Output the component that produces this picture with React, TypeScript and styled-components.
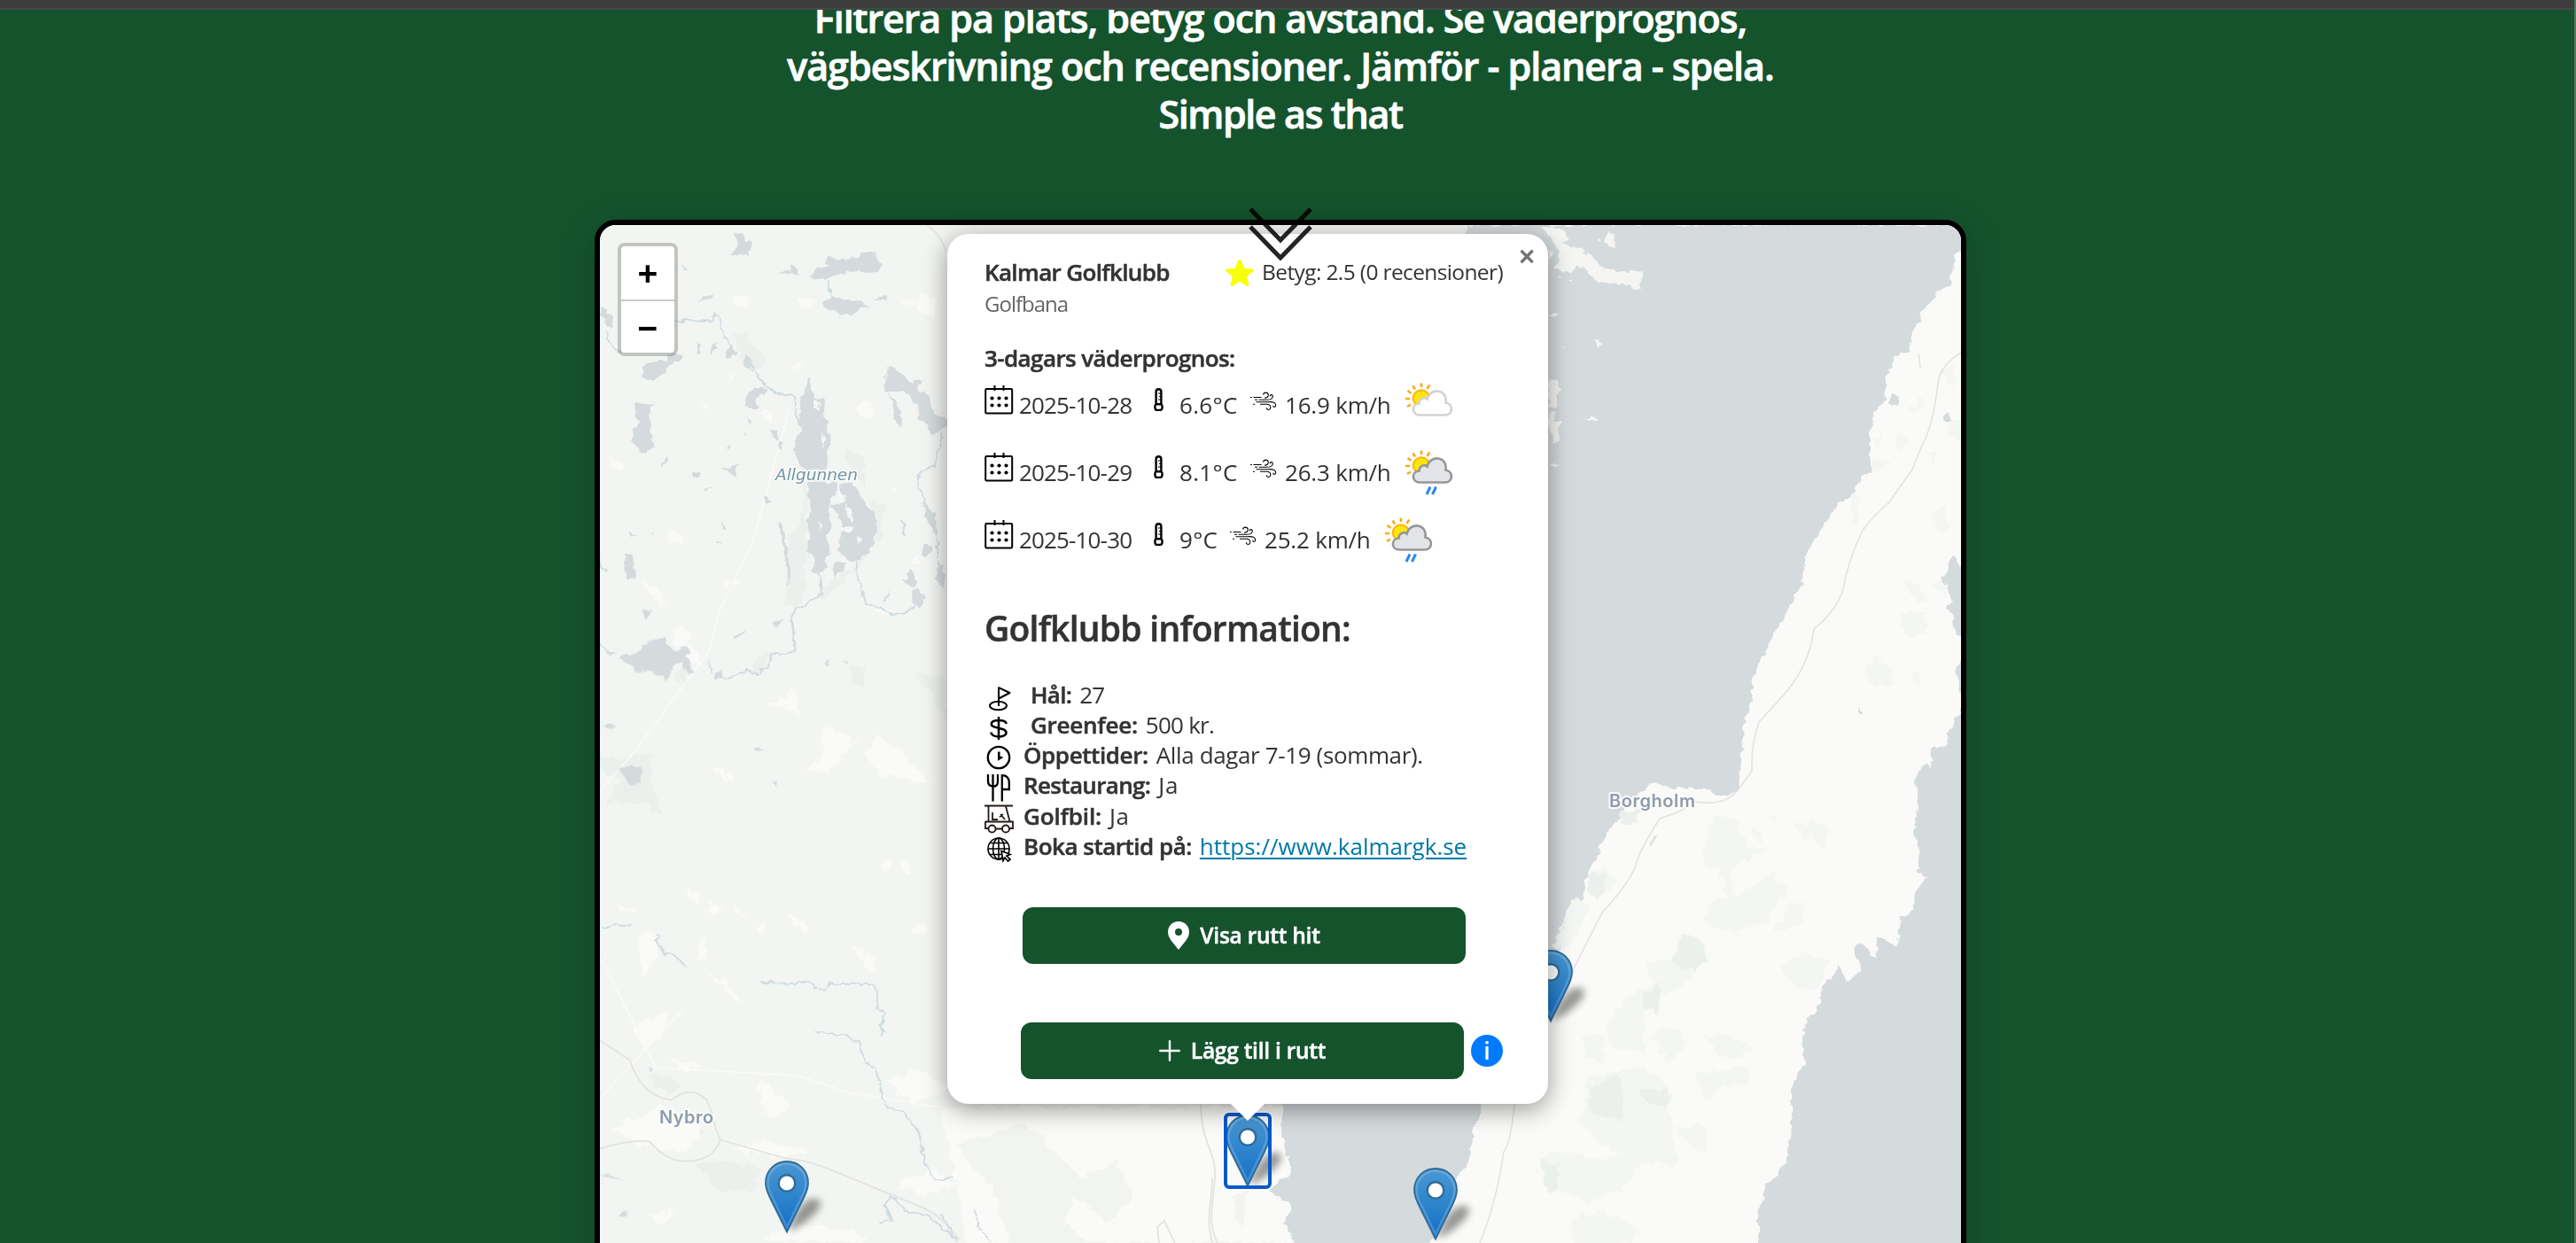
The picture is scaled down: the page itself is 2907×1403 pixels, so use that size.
import React from "react";
import styled, { createGlobalStyle } from "styled-components";

const sans = `"Open Sans", "Noto Sans", sans-serif`;

const GlobalStyle = createGlobalStyle`
  * { box-sizing: border-box; }
  body { margin: 0; background: #15532d; font-family: ${sans}; }
`;

const Page = styled.div`
  position: relative;
  height: 1403px;
  overflow: hidden;
  padding-right: 15px;
  background: #15532d;
  border-right: 2px solid #4f7a60;
  display: flex;
  flex-direction: column;
  align-items: center;
`;

const TopBar = styled.div`
  position: relative;
  z-index: 2;
  flex: none;
  align-self: stretch;
  height: 11px;
  margin-right: -17px;
  background: #3c3c3c;
  border-bottom: 2px solid #464646;
`;

const Intro = styled.h2`
  flex: none;
  margin: -17px 0 0;
  display: flex;
  flex-direction: column;
  align-items: center;
  color: #fff;
  font-size: 43px;
  font-weight: 600;
  line-height: 54px;
  -webkit-text-stroke: 0.8px #fff;
`;

const Line = styled.span<{ $ls: number }>`
  white-space: pre;
  letter-spacing: ${(p) => p.$ls}px;
`;

const MapFrame = styled.div`
  position: relative;
  flex: none;
  width: 1548px;
  height: 1400px;
  margin-top: 92px;
  border: 6px solid #000;
  border-radius: 24px;
  background: #f3f5f2;
  box-shadow: 0 8px 40px rgba(0, 0, 0, 0.18);
`;

const MapSurface = styled.svg`
  display: block;
  width: 1536px;
  height: 1149px;
  border-radius: 18px 18px 0 0;
`;

const ZoomControl = styled.div`
  position: absolute;
  left: 20px;
  top: 20px;
  width: 68px;
  display: flex;
  flex-direction: column;
  border: 4px solid rgba(0, 0, 0, 0.2);
  border-radius: 8px;
  background: #fff;
  background-clip: padding-box;
`;

const ZoomButton = styled.button`
  height: 60px;
  padding: 2px 0 0;
  border: 0;
  background: none;
  color: #000;
  font: 700 39px/58px "Liberation Sans", Arial, sans-serif;
  & + & { border-top: 2px solid #ccc; }
`;

const MarkerSpot = styled.div<{ $x: number; $y: number; $focus?: boolean }>`
  position: absolute;
  left: ${(p) => p.$x - 25}px;
  top: ${(p) => p.$y - 82}px;
  width: 50px;
  height: 82px;
  border-radius: 4px;
  outline: ${(p) => (p.$focus ? "4px solid #0659cc" : "none")};
  outline-offset: -2px;
  box-shadow: ${(p) => (p.$focus ? "0 0 0 4px #fff" : "none")};
  svg { display: block; overflow: visible; }
`;

const Chevrons = styled.svg`
  position: absolute;
  z-index: 5;
  left: 731px;
  top: -22px;
`;

const Popup = styled.section`
  position: absolute;
  left: 392px;
  top: 10px;
  width: 678px;
  height: 982px;
  padding: 25px 52px 28px 42px;
  display: flex;
  flex-direction: column;
  border-radius: 24px;
  background: #fff;
  color: #333;
  font-size: 26px;
  line-height: 36px;
  box-shadow: 0 6px 28px rgba(0, 0, 0, 0.4);
`;

const PopupTip = styled.div`
  position: absolute;
  left: 318px;
  top: 980px;
  width: 42px;
  height: 21px;
  background: #fff;
  clip-path: polygon(0 0, 100% 0, 50% 100%);
`;

const CloseButton = styled.button`
  position: absolute;
  right: 0;
  top: 2px;
  width: 48px;
  height: 48px;
  padding: 0;
  border: 0;
  background: none;
  color: #757575;
  font: 700 31px/48px "Liberation Sans", Arial, sans-serif;
`;

const HeaderRow = styled.header`
  display: flex;
  justify-content: space-between;
  height: 36px;
`;

const Strong = styled.strong<{ $ls?: number }>`
  font-weight: 600;
  white-space: pre;
  letter-spacing: ${(p) => p.$ls ?? -0.6}px;
  -webkit-text-stroke: 0.5px currentColor;
`;

const Rating = styled.div`
  display: flex;
  align-items: flex-start;
  gap: 9px;
  margin-right: -1px;
  font-size: 24.5px;
  letter-spacing: -0.62px;
  svg { margin-top: 4px; }
`;

const Kind = styled.div`
  height: 34px;
  line-height: 35px;
  font-size: 24px;
  letter-spacing: -1px;
  color: #666;
`;

const SectionTitle = styled.div`
  margin-top: 27px;
  height: 36px;
`;

const WeatherRow = styled.div`
  display: flex;
  align-items: flex-start;
  height: 76px;
`;

const DateIcon = styled.svg`
  flex: none;
  margin: 12px 6px 0 0;
`;

const WeatherText = styled.span<{ $w: number; $ls: number }>`
  width: ${(p) => p.$w}px;
  padding-top: 17px;
  white-space: pre;
  letter-spacing: ${(p) => p.$ls}px;
`;

const ThermoIcon = styled.svg`
  flex: none;
  margin: 16px 18px 0 0;
`;

const WindIcon = styled.svg`
  flex: none;
  margin: 20px 9px 0 0;
`;

const SkyIcon = styled.svg`
  flex: none;
  margin-top: 10px;
`;

const InfoTitle = styled.h3`
  margin: 32px 0 31px;
  font-size: 39px;
  line-height: 54px;
  font-weight: 400;
`;

const InfoList = styled.ul`
  margin: 0;
  padding: 0;
  list-style: none;
`;

const InfoRow = styled.li<{ $indent: number }>`
  display: flex;
  height: 34.2px;
  line-height: 35.6px;
  svg { flex: none; margin-right: ${(p) => p.$indent}px; }
`;

const InfoValue = styled.span<{ $ls: number }>`
  margin-left: 9px;
  white-space: pre;
  letter-spacing: ${(p) => p.$ls}px;
`;

const SiteLink = styled.a`
  margin-left: 9px;
  color: #0078a8;
  text-decoration: underline;
  text-decoration-thickness: 2px;
  text-underline-offset: 3px;
`;

const Actions = styled.div`
  margin-top: 52px;
  display: flex;
  flex-direction: column;
  gap: 66px;
`;

const ActionRow = styled.div<{ $offset: number }>`
  display: flex;
  align-items: center;
  gap: 8px;
  padding-left: ${(p) => p.$offset}px;
`;

const ActionButton = styled.button`
  flex: none;
  width: 500px;
  height: 64px;
  padding: 0;
  display: flex;
  align-items: center;
  justify-content: center;
  gap: 12px;
  border: 0;
  border-radius: 12px;
  background: #15532d;
  color: #fff;
  font: 600 24.5px/36px ${sans};
  letter-spacing: -0.25px;
  -webkit-text-stroke: 0.5px #fff;
`;

const InfoBadge = styled.span`
  flex: none;
  width: 36px;
  height: 36px;
  border-radius: 50%;
  background: #007bff;
  color: #fff;
  text-align: center;
  font: 600 27px/35px ${sans};
`;

/* ---------- map drawing ---------- */

const WATER = "#d5dadd";
const GREEN = "#ebf0ec";
const PALE = "#fafaf8";

const lakes = [
  "M505 95l25 8 12 22 22 4-4 24-10 24-25-10-32 8 18-22 8-20-6-18z",
  "M757 248l30-28 34-6-2-34 50 8 50-4 20-16 38-4 18 24 8 28-16 16-36 2-36-8-40 12-40 4-20 12-34-2z",
  "M805 340l30-24 38 8 50 2 46 20-40 12-28 18-36 2-26-20-34-6zM970 320l55-10-8 14z",
  "M703 197l14 26 10 20-22-4-48-4 38-12z",
  "M378 330l30-16 22-6-10 14-38 10zM316 208l38 16-20-2z",
  "M52 350l28 10-6 14 22 6-4 40-20-10-8-30-12-8z",
  "M196 555l40-20 30-2 30-28 30 10-4 18-40 10-20 36-40 24-30-18z",
  "M378 475l10 4 4 28-14 4zM430 480l18-14-6 30-14 22zM480 500l18-28 18 36-20 4-18 18zM545 508l20 20 10 28-22 6-18-24z",
  "M545 650l30-30 44 6-4 28-22-12-18 20 16 26-14 12-34-14z",
  "M166 670l36 8 34-2-18 14 4 60 14 70-30 22-20-2-24-32 4-48 14-20z",
  "M757 580l12 56 16 30 20-10 4 28-4 36 18 14-4 40 14 10-10 42 0 70-36 6-50-2-20-40-12-24 8-40 20-24-8-40 6-60-2-20 14-10 4-28z",
  "M755 945l100-4 0 34-30 40 4 90-12 20 10 60-20 30 16 16-40 22-18-10 16-20-6-30-22-14 4-60 4-90z",
  "M864 950l42-10 36 60 36 50 14 46-30 90-36 20-26 10-40-40 4-56 20-14-34-60-26-34 30 6 12-40z",
  "M1014 640l6-80 30-6 50 50 48-10-24 26 40 30 16 56 36 14 20 30-26 10-30 26-30-46-20-16-10-50-40-40z",
  "M1026 640l34 40 16 50-8 28-18-22-6-50z",
  "M1140 1010l46 40 8 60-6 20-22-40-16-50zM1150 1150l30 14-20 30-22-6zM1196 1200l26 60-10 36-22-20z",
  "M1078 1280l26-44 22 50-20 10zM1108 1310l20-12 24 40-14 26-30-12z",
  "M660 1070l20 60 4 60 12 50 0 30-12 24 4-50-14-50-2-50-20-50z",
  "M456 898l70-18-22 22 4 30-26-30zM362 908l28-2-4 16-22-2zM258 880l20-28-2 20-16 14zM398 964l26 0-14 10z",
  "M632 770l18-8 4 30-12 6zM658 798l14 10-6 26-10-12zM480 830l8-20 4 24zM548 715l12 32-8-4zM540 770l12 14-8 6z",
  "M140 1184l22 10 6 50 8 20-34 6-4-40zM50 1200l26 50-24-24z",
  "M196 1376l28-4-4 28-14 8zM232 1480l40-8 6 30-40 0zM506 1466l34-20 0 14-32 14zM642 1420l28-16-6 22-20 10z",
  "M836 1240l16-26 32 4-14 24-24 22zM1010 1340l20-36-2 20-14 24zM606 990l28 20-22 6z",
  "M152 1106l18 14-14 4zM224 1116l14 2-10 8zM440 1144l20 4-16 4zM460 1070l16 30-10 0zM1074 1066l12 20 0 40-8-4z",
];
const lakesLow = [
  "M110 95l30-10 40-5 30-25 50-8 50 30 40-12 10 14-20 10 30 42-20 4-20-30-30 6-20 40-60-24-50 4-20-20z",
  "M115 372l50-6 28 6-10 40-30 2-20-14zM62 262l46 2-24 8zM572 320l40 6-30 4z",
  "M436 140l26-12 4 14-26 10zM508 44l34-16-30 18zM880 102l12 8-10 4zM634 402l20 8-8 12zM808 114l24-16-8 14z",
  "M52 1390l80 20-60-8zM116 1500l34-16-20 22zM390 1284l16 10-10 2zM216 1126l18 4-12 8z",
];
const rivers = [
  "M75 430q6 50 45 75M305 402l30-4 0-8 50 2 40 4 14-22 12 10 8 36 26 46 12 20M566 562l46 52 40 28 40 4 18 14 2 44 14 40",
  "M1205 770q10 40-12 70l-8 44-44 20-16 38 20 50 10 30M792 1244l10 76-50 40-34 8-18 30 4 40 6 60",
  "M920 1210l4 60 14 40 12 44 50 14 50 24 30-4 40-28M824 260l6 54M1190 1130l8 70",
];
const riversLow = [
  "M704 0l8 74-26 10-52 4-12 30-40 18-30-10-60 20-40-4M418 102l14 30M52 64l50 24",
  "M52 776l40-8 68 2M242 786l10 12-12 10 30 32 34 4 44 34",
  "M592 912l120 2 36-4 60 24 20-18 40 0 110 0 10 30 4 30 24 12-14 40 10 10-12-20 8 30",
  "M780 1036l100 10 50 18 16 40 46 40 16 60 20 28 40 2 60 50 16 60 20 40 20 24 50-2",
  "M1000 1518l40-10-26-34 20-24 60 40 80 14 60 40 24 14",
];
const roadsLow = [
  "M52 1058l60 30 40 20q40 90 140 100q70-40 120 0q20 30 30 70l16 30q-20 54-120 54-60 0-120-50-60-6-166 18M458 1308q140 30 230 48 60 0 180 38l280 86q60 20 120 80",
];
const pale = [
  "M490 330l40-20 40 10-20 26-40 6zM720 330l50-10 10 20-30 20zM1140 300l50 20-10 60-60-20zM1080 320l40 20-30 10z",
  "M915 690l30-20 28-4-8 60-30-10zM580 700l50 10 0 30zM80 850l60 40-10 20-40-20zM270 1110l76 10-10 40-50-10z",
  "M180 1280l60 20 40 60-20 0zM460 1300l50-36 10 26zM290 1430l50 10 10 60-40 0zM960 1370l90 10-30 16zM700 540l40 10-30 12zM1100 1220l36-30-6 30z",
  "M400 660l12 36-10 4zM480 600l24-30 0 20zM1030 970l24-20-6 30z",
];
const paleLow = [
  "M280 30l60-20 20 60 40 40-60 0zM620 210l60-20 34-30 6 80-50-20zM740 380l60-30 10-80 60 10 60 24-60 30-40 50z",
  "M950 340l40-50 80 40 110 90-80-20-100-10zM420 370l50 0 30 36-40-10zM1000 610l40-10 0 34-34 4zM1064 620l36-16-6 34z",
  "M340 670l50 20-4 20-40-14zM690 740l60 20-4 24-40-14zM496 716l60 30-50-10zM410 730l20-20 40 24-30 4zM580 770l30-10-10 36z",
  "M420 890l60 20 60 60-60-30zM900 820l80 30 0 44-60-50zM110 710l60 30-50-6zM180 800l60-20 10 60-50 60-10-30z",
  "M100 1280l160-60 140 60-60 60-160-20zM590 1150l60 40 50 30-60 40-40-20zM500 1330l120-20 140 30-130 10zM1020 1160l120-30 90 50-120 40z",
  "M1040 1420l140-40 80 40-100 30zM160 1020l120-30-20 60-60 30zM280 1100l120 20-60 20zM600 1560l120-40 200 20 40 28zM220 1500l80-20-30 50zM380 800l20 0 20 60-30 0zM1110 770l40-10 10 24-40 6z",
];
const green = [
  "M500 450l50-20 6 40 50 50-10 50-60-40zM880 840l60 10 10 60 0 60-40-60-20-30zM740 940l14 0 0 250-20 170-60 0 20-240 40-30z",
  "M970 1000l50 20-20 100-80 110-110 110-20-20 120-100 40-60z",
];
const greenLow = [
  "M52 340l60 10 110-10 10 100 30 50-60-30-130 0 50-60-70-20zM890 120l60 0-10 50-30-10zM1120 130l100 20 0 100-50-70zM576 90l46 0-20 40-30-4zM300 130l50-10-10 40-40-2z",
  "M380 1370l100-10 120 20-40 60-110-6zM210 1140l80 10 30 20-40 30z",
];
const islands = [
  "M0 70l40-5 60 35-40 15 80 20 40 30 20 20 60 14 80-2 4 20-10 36-60-14-80-6-60-50-40 20-50-10 20-50-20-30z",
  "M210 110l10-28 24 10 4 30-20 4zM175 400l30 8-10 22zM140 636l30-10 18 14zM190 110l10-4 2 8z",
  "M22 520l30 4 18 24-20 14-2 40-26 0zM30 610l14 10-4 20 22 4-8 24 6 30-16 10-10-22-12-40zM22 768l40 2-20 12zM22 328l40-4-20 14zM22 130l12 20-10 14zM64 420l14 0-8 6zM84 340l6 10-6-4zM90 224l14 2-6 6zM54 208l14 8-8 2z",
];
const olandPatches = [
  "M1222 1115l40-5 50 60-40 8zM1216 1205l84 0 6 60-80 6zM1090 1395l40-60 56 30 4 50-60 10zM1238 1385l40 0 0 40zM1245 605l40-30 10 30zM1200 670l50 20-40 46zM1300 740l40-5-10 30zM1320 910l40-30 16 80-30 10zM1380 640l40 0 0 60-40-10zM1050 860l26 0-20 90-10-10zM1120 690l40-20-20 50zM1120 750l70 6-70 40zM1340 500l60-20-10 60zM1315 1120l40-10 20 50z",
];
const olandPatchesLow = [
  "M680 310l80 20 30 100-60 50 20 80 120-80 50 50-80 100-90 30-100-30 10-60 70-20-40-80-50-20zM990 330l60 10-4 70-40-20zM880 660l50-90 56 0-20 60zM460 740l110-10 40 60-100 50-120 100-60-20 60-70 90-40z",
  "M900 750l60-30 90 20-10 60-60 30-70-50zM270 490l60-30 30 50-60 40zM150 700l70-140 60 10-40 80-40 50zM330 900l120-10 0 120-110-20zM250 960l70 0 0 80-60-10zM260 1090l120-30 70-10 80 60 10 100 20 130-140-10-120-60-60-60 20-60z",
  "M110 1320l60-20 160 20 120-10-70 100-120 40-140-60zM210 1500l100-30 120 60-30 40-180 0zM620 1070l180-20-10 60-80-10-60 50zM640 960l100 0 70 40-90 30zM560 1230l90-10 0 80-40-10zM480 960l60-30 60 50-70 60zM800 350l30 0 10 50zM750 400l100 10-60 40zM940 340l70 0-30 40zM850 310l40 6-20 20z",
];
const olandGreen = [
  "M545 730l30-70 70 20 6 60-40 30-60-20zM380 300l70-10-40 50-40-10zM270 1110l100-40 10 140-100-20zM440 1120l90 0 0 50-80-10zM280 480l60 0-40 80-30-20zM450 830l50-20 0 80-50-10zM110 1320l60 20-10 80-40-20z",
];

function MapDrawing() {
  return (
    <MapSurface viewBox="677 254 1536 1149">
      <defs>
        <filter id="rough" x="-5%" y="-5%" width="110%" height="110%">
          <feTurbulence type="fractalNoise" baseFrequency="0.09" numOctaves="3" seed="4" result="n" />
          <feDisplacementMap in="SourceGraphic" in2="n" scale="13" xChannelSelector="R" yChannelSelector="G" />
        </filter>
        <filter id="coast" x="-5%" y="-5%" width="110%" height="110%">
          <feTurbulence type="fractalNoise" baseFrequency="0.12" numOctaves="2" seed="9" result="n" />
          <feDisplacementMap in="SourceGraphic" in2="n" scale="8" xChannelSelector="R" yChannelSelector="G" />
        </filter>
      </defs>
      <rect x="677" y="254" width="1536" height="1149" fill="#f3f5f2" />
      <g filter="url(#rough)">
        <path d="M1060 1250H1460V1403H1090L1080 1340Z" fill={PALE} />
        <path d="M1080 1290l80-20 60 60-20 50 30 24h-90l-20-60zM1200 1340l60-30 20 40-30 30zM1390 1350l20-10-10 50z" fill="#f1f4f1" />
        <g transform="translate(660 230) scale(.33333)">
          <path d={green.join("")} fill={GREEN} />
          <path d={pale.join("")} fill={PALE} />
        </g>
        <g transform="translate(660 700) scale(.33333 .4484)">
          <path d={greenLow.join("")} fill={GREEN} />
          <path d={paleLow.join("")} fill={PALE} />
        </g>
      </g>
      <g fill="none" stroke="#fafbf9" strokeWidth="1.6">
        <path d="M890 465L850 610L812 690L800 735L715 850L677 893M677 1080L740 1205L900 1214L960 1234L1070 1251M677 1240L770 1140" />
      </g>
      <g fill="none" stroke="#e2e3e2" strokeWidth="1.8">
        <g transform="translate(660 700) scale(.33333 .4484)">
          <path d={roadsLow[0]} vectorEffect="non-scaling-stroke" />
        </g>
        <path d="M1045 254Q1060 262 1068 284M1355 1246C1355 1290 1373 1300 1371 1330S1362 1380 1374 1403M1368 1330C1368 1360 1360 1370 1368 1403M1308 1403L1306 1385L1314 1378L1326 1403" />
      </g>
      <g fill="none" stroke="#cfdae1" strokeWidth="1.9" strokeLinejoin="round" filter="url(#coast)">
        <g transform="translate(660 230) scale(.33333)">
          <path d={rivers.join("")} vectorEffect="non-scaling-stroke" />
        </g>
        <g transform="translate(660 700) scale(.33333 .4484)">
          <path d={riversLow.join("")} vectorEffect="non-scaling-stroke" />
        </g>
        <path d="M1060 1331L1075 1330M1100 1366L1106 1385L1118 1403M1062 1370L1080 1403" />
      </g>
      <g fill={WATER} filter="url(#coast)">
        <g transform="translate(660 230) scale(.33333)">
          <path d={lakes.join("")} />
          <path d="M780 670l14 6-2 22-14-4zM804 774l8 20-4 30-8-14zM886 1020l16 20 6 50-20-30zM868 1104l22-14 24 10-24 20zM920 1120l16 16-10 20zM792 1070l10 20-8 12zM846 970l36 20-6 30-26-14z" fill="#f6f7f5" />
        </g>
        <g transform="translate(660 700) scale(.33333 .4484)">
          <path d={lakesLow.join("")} />
        </g>
        <path d="M1654 254H2240V1420H1462L1458 1395L1449 1380L1459 1362L1440 1350L1432 1343L1458 1322L1450 1296L1446 1276L1448 1240L1500 1100L1700 700Z" />
      </g>
      <g filter="url(#coast)">
        <path
          fill={PALE}
          d="M2230 270L2213 284L2205 289L2201 322L2188 329L2173 347L2158 375L2155 396L2139 402L2130 423L2127 448L2112 471L2110 504L2113 532L2102 539L2092 556L2075 567L2058 592L2037 626L2033 659L2020 685L2003 714L1987 747L1977 766L1977 789L1970 808L1965 850L1961 890L1945 899L1924 890L1886 890L1865 883L1852 894L1833 915L1815 938L1791 987L1784 1021L1764 1062L1746 1096L1690 1200L1673 1246L1662 1280L1657 1313L1643 1327L1629 1373L1605 1420H1984L1984 1369L1993 1338L2015 1313L2022 1273L2022 1227L2036 1200L2034 1169L2039 1148L2050 1142L2058 1111L2068 1104L2075 1087L2082 1108L2101 1096L2093 1073L2099 1065L2117 1081L2118 1058L2141 1067L2144 1038L2160 1027L2161 1006L2175 990L2165 985L2165 958L2160 942L2165 912L2161 881L2170 863L2180 865L2181 844L2196 842L2199 825L2210 808L2216 795L2207 758L2216 740L2216 720L2207 716L2205 697L2196 685L2203 678L2198 666L2190 653L2197 649L2203 624L2213 641L2230 650Z"
        />
        <g transform="translate(1740 230) scale(.33333 .3827)">
          <path d={islands.join("")} fill="#f5f6f3" />
          <path d="M1172 590l14-30 26 6-10 30zM1362 626l14-10 10 20-14 14zM1072 1488l20 10-16 6zM140 140l20 4-10 14z" fill={WATER} />
        </g>
      </g>
      <g filter="url(#rough)">
        <g transform="translate(1740 230) scale(.33333 .3827)">
          <path d={olandPatches.join("")} fill="#f4f6f3" />
        </g>
        <g transform="translate(1700 800) scale(.34444 .3846)">
          <path d={olandPatchesLow.join("")} fill="#f3f6f3" />
          <path d={olandGreen.join("")} fill={GREEN} />
        </g>
      </g>
      <path
        d="M2213 398Q2190 412 2187 432Q2182 480 2168 505L2158 530Q2140 555 2132 567Q2105 590 2099 605Q2085 635 2080 665Q2072 690 2047 710Q2042 750 2015 782L1985 815Q1976 840 1977 870Q1970 880 1960 893Q1945 910 1915 905L1895 916L1873 924Q1850 960 1847 973Q1843 992 1808 1030L1770 1105L1747 1137M1709 1246Q1705 1290 1697 1300Q1688 1360 1670 1403M2165 399L2167 415"
        fill="none"
        stroke="#e2e3e2"
        strokeWidth="1.6"
      />
      <path d="M1862 954L1869 943" stroke="#e2e3e2" strokeWidth="3" />
      <g paintOrder="stroke" stroke="#fbfbf9" strokeWidth="4" strokeLinejoin="round">
        <text x="1816" y="911" fontSize="20" fontWeight="600" letterSpacing=".55" fill="#8e9cad" fontFamily="Inter, sans-serif">Borgholm</text>
        <text x="744" y="1268" fontSize="20" fontWeight="600" letterSpacing=".45" fill="#8e9cad" fontFamily="Inter, sans-serif">Nybro</text>
        <text x="875" y="542" fontSize="18.5" fontStyle="italic" fill="#6e95a5" strokeWidth="3" fontFamily="DejaVu Sans, sans-serif">Allgunnen</text>
      </g>
    </MapSurface>
  );
}

function Marker({ x, y, focus }: { x: number; y: number; focus?: boolean }) {
  const id = `pin${x}`;
  return (
    <MarkerSpot $x={x} $y={y} $focus={focus}>
      <svg width="50" height="82" viewBox="0 0 50 82">
        <defs>
          <linearGradient id={id} x1="0" y1="0" x2="0" y2="1">
            <stop offset="0" stopColor="#4a98d2" />
            <stop offset="1" stopColor="#126fc6" />
          </linearGradient>
          <filter id={`${id}s`} x="-60%" y="-60%" width="220%" height="220%">
            <feGaussianBlur stdDeviation="4.5" />
          </filter>
        </defs>
        <path d="M26 80C32 66 38 50 50 44C63 40 67 48 58 58C50 67 38 76 26 80Z" fill="#000" opacity=".4" filter={`url(#${id}s)`} />
        <path
          fillRule="evenodd"
          d="M25 1C11.500 1 1 11.500 1 25C1 31 3 36 6 42L25 80.500L44 42C47 36 49 31 49 25C49 11.500 38.500 1 25 1Z"
          fill={`url(#${id})`}
          stroke="#2e6c97"
          strokeWidth="1.800"
        />
        <path d="M25 3.500C13 3.500 3.500 13 3.500 25C3.500 30.500 5.500 35.500 8.300 41L25 75L41.700 41C44.500 35.500 46.500 30.500 46.500 25C46.500 13 37 3.500 25 3.500Z" fill="none" stroke="#fff" strokeOpacity=".18" strokeWidth="2.500" />
        <circle cx="25" cy="25.500" r="9.300" fill="#fff" stroke="#2e6c97" strokeWidth="2.400" />
      </svg>
    </MarkerSpot>
  );
}

/* ---------- popup icons ---------- */

const ink = { fill: "none", stroke: "#000", strokeWidth: 2.2 };

const Calendar = () => (
  <DateIcon width="33" height="34" viewBox="0 0 33 34" {...ink} strokeWidth={2}>
    <rect x="1.200" y="5" width="30" height="27.500" rx="1.200" />
    <path d="M11.500 1v6M21.500 1v6" />
    <g fill="#000" stroke="none">
      {[8.5, 16.5, 24.5].map((x) => [15.5, 23.5].map((y) => <circle key={`${x}-${y}`} cx={x} cy={y} r="2.100" />))}
    </g>
  </DateIcon>
);

const Thermometer = () => (
  <ThermoIcon width="11" height="27" viewBox="0 0 11 27" {...ink} strokeWidth={2.4}>
    <path d="M2.600 18V4.200a2.900 2.900 0 0 1 5.800 0V18M2.600 18.300h5.800q1.500 1.200 1.200 3.800t-2.200 2.800h-3.800q-1.900 0-2.200-2.800t1.200-3.800z" />
    <path d="M5 6h3M6 9.500h2M5 13h3" strokeWidth="1.200" />
  </ThermoIcon>
);

const Wind = () => (
  <WindIcon width="30" height="22" viewBox="0 0 30 22" {...ink} strokeWidth={1.1}>
    <path d="M3.500 6.500h9M0 6.500h1.800M14.500 3.500C15.300.3 19.700.3 20.300 3.500C20.500 6 18.500 7 16 7.200" />
    <path d="M5 9.300h3M9.500 9.300h8C23 9.500 25.300 8 25.300 5.200C25 2.800 22 3.300 22.300 5.400" />
    <path d="M6.500 11.800h13.500C25.500 11.200 28.700 12.500 28.700 15.500C28.400 18 25.600 17.800 25.700 15.800" />
    <path d="M3 14.200h2M11 14.300h8C22 14.500 23.500 16.500 22.600 19C21.500 21.300 18.300 20.800 18.200 18.300" />
  </WindIcon>
);

const Sky = ({ rain }: { rain: boolean }) => (
  <SkyIcon width="54" height="52" viewBox="0 0 54 52">
    <g stroke="#fcab14" strokeWidth="2.600">
      <path d="M18 .5v4.500M8.500 3.500l2.500 4M2.500 9l4 3M0 18h5M2 27l4-2.500M27.200 2.500L24.500 7" />
    </g>
    <circle cx="18" cy="17.500" r="9.200" fill="#ffe60a" stroke="#fdb813" strokeWidth="2.200" />
    <path
      d="M16.500 36.500C6.500 36.500 6.500 24 15.500 23.500C15.500 18 21 15.500 24.500 18.500C27.500 5.500 47.500 6 45.500 22.500C54.500 24 54 36.500 44.500 36.500Z"
      fill={rain ? "#e3e4e8" : "#fff"}
      stroke={rain ? "#969696" : "#d2d2d2"}
      strokeWidth="2.600"
    />
    {rain && <path d="M28 41.500l-4 8.500M34.500 41.500l-4 8.500" stroke="#2c8aea" strokeWidth="3" />}
  </SkyIcon>
);

const Box = ({ children, dy = 0 }: { children: React.ReactNode; dy?: number }) => (
  <svg width="33" height="34" viewBox={`0 ${-dy} 33 34`} overflow="visible" {...ink}>
    {children}
  </svg>
);

const infoIcons = {
  flag: (
    <Box dy={8}>
      <ellipse cx="15.500" cy="21.500" rx="9.500" ry="4.800" strokeWidth="2" />
      <path d="M16 22V1.200L28.500 7L16 13.500" strokeWidth="2" strokeLinejoin="round" />
    </Box>
  ),
  dollar: (
    <Box dy={8}>
      <path d="M16 0v26M24.500 8C24.500 2.500 7.800 2.500 7.800 8.200C7.800 14 24.500 11.500 24.500 18C24.500 24 7.500 24 7.500 17.500" strokeWidth="2.500" />
    </Box>
  ),
  clock: (
    <Box dy={7}>
      <circle cx="16" cy="13" r="12.200" strokeWidth="2.300" />
      <path d="M15 6.500h2.500v5l4 1.200-6.500 4z" fill="#000" stroke="none" />
    </Box>
  ),
  fork: (
    <Box dy={5}>
      <path d="M4 0v8q0 5 5.500 5.500T15 8V0M9.500 0v30.500M19.800 30.500V1.200q8 0 8 8.800v7h-8" strokeWidth="2.300" />
    </Box>
  ),
  cart: (
    <Box dy={4}>
      <g stroke="#231a15" strokeWidth="1.800">
        <path d="M0 1.500h32M4.500 2v17M24 2l4.500 17M1 19.500h31v7.500h-4.500M1 19v8h3M13 27.500h7M9 9v8h6M18 11l5 6M17 14l4-3" />
        <circle cx="8.500" cy="27.500" r="4" />
        <circle cx="24" cy="27.500" r="4" />
      </g>
    </Box>
  ),
  globe: (
    <Box dy={7}>
      <g strokeWidth="1.600">
        <circle cx="16" cy="13" r="12" />
        <ellipse cx="16" cy="13" rx="6.500" ry="12" />
        <path d="M16 1v24M4 13h24M6 6.500h20M6 19.500h20" />
      </g>
      <path d="M19 15.500l10 4-4 1.500 4 4-2.500 2-3.500-4-2 3.500z" fill="#fff" strokeWidth="1.700" />
    </Box>
  ),
};

const forecast = [
  { date: "2025-10-28", temp: "6.6°C", tempWidth: 80, wind: "16.9 km/h", rain: false },
  { date: "2025-10-29", temp: "8.1°C", tempWidth: 80, wind: "26.3 km/h", rain: true },
  { date: "2025-10-30", temp: "9°C", tempWidth: 57, wind: "25.2 km/h", rain: true },
];

const facts: { icon: keyof typeof infoIcons; label: string; value: string; indent: number; ls: number; vls: number }[] = [
  { icon: "flag", label: "Hål:", value: "27", indent: 19, ls: -0.7, vls: -0.9 },
  { icon: "dollar", label: "Greenfee:", value: "500 kr.", indent: 19, ls: -0.25, vls: -0.75 },
  { icon: "clock", label: "Öppettider:", value: "Alla dagar 7-19 (sommar).", indent: 11, ls: -0.4, vls: -0.37 },
  { icon: "fork", label: "Restaurang:", value: "Ja", indent: 11, ls: -0.65, vls: 0.6 },
  { icon: "cart", label: "Golfbil:", value: "Ja", indent: 11, ls: -0.15, vls: 0.6 },
];

export default function App() {
  return (
    <Page>
      <GlobalStyle />
      <TopBar />
      <Intro>
        <Line $ls={-1.05}>Filtrera på plats, betyg och avstånd. Se väderprognos,</Line>
        <Line $ls={-1.02}>vägbeskrivning och recensioner. Jämför - planera - spela.</Line>
        <Line $ls={-1.4}>Simple as that</Line>
      </Intro>
      <MapFrame>
        <MapDrawing />
        <ZoomControl>
          <ZoomButton>+</ZoomButton>
          <ZoomButton>−</ZoomButton>
        </ZoomControl>
        <Marker x={1073} y={900} />
        <Marker x={731} y={1086} focus />
        <Marker x={943} y={1146} />
        <Marker x={211} y={1138} />
        <Popup>
          <HeaderRow>
            <Strong $ls={-0.65}>Kalmar Golfklubb</Strong>
            <Rating>
              <svg width="32" height="31" viewBox="0 0 32 31" fill="#f8ff08">
                <path d="M14 1.200q2-2 4 0l3.200 8.600 9.300.7q2 1 .8 2.700l-7.200 6.100 2.400 9.200q-.6 2-3 1.300L16 24.800l-7.500 5q-2.400.7-3-1.300l2.400-9.200L.7 13.200q-1.200-1.700.8-2.700l9.300-.7z" />
              </svg>
              Betyg: 2.5 (0 recensioner)
            </Rating>
          </HeaderRow>
          <Kind>Golfbana</Kind>
          <SectionTitle>
            <Strong $ls={-0.6}>3-dagars väderprognos:</Strong>
          </SectionTitle>
          {forecast.map((day) => (
            <WeatherRow key={day.date}>
              <Calendar />
              <WeatherText $w={152} $ls={-0.85}>{day.date}</WeatherText>
              <Thermometer />
              <WeatherText $w={day.tempWidth} $ls={0.3}>{day.temp}</WeatherText>
              <Wind />
              <WeatherText $w={136} $ls={-0.2}>{day.wind}</WeatherText>
              <Sky rain={day.rain} />
            </WeatherRow>
          ))}
          <InfoTitle>
            <Strong $ls={-0.75}>Golfklubb information:</Strong>
          </InfoTitle>
          <InfoList>
            {facts.map((f) => (
              <InfoRow key={f.label} $indent={f.indent}>
                {infoIcons[f.icon]}
                <Strong $ls={f.ls}>{f.label}</Strong>
                <InfoValue $ls={f.vls}>{f.value}</InfoValue>
              </InfoRow>
            ))}
            <InfoRow $indent={11}>
              {infoIcons.globe}
              <Strong $ls={-0.5}>Boka startid på:</Strong>
              <SiteLink>https://www.kalmargk.se</SiteLink>
            </InfoRow>
          </InfoList>
          <Actions>
            <ActionRow $offset={43}>
              <ActionButton>
                <svg width="24" height="32" viewBox="0 0 24 32" fill="#fff" fillRule="evenodd">
                  <path d="M12 0C5 0 0 5 0 12C0 19 6 24 12 32C18 24 24 19 24 12C24 5 19 0 12 0ZM12 8a4 4 0 1 1 0 8a4 4 0 0 1 0-8Z" />
                </svg>
                Visa rutt hit
              </ActionButton>
            </ActionRow>
            <ActionRow $offset={41}>
              <ActionButton>
                <svg width="24" height="24" viewBox="0 0 24 24" stroke="#fff" strokeWidth="2.400" strokeLinecap="round">
                  <path d="M12 1.200v21.600M1.200 12h21.600" />
                </svg>
                Lägg till i rutt
              </ActionButton>
              <InfoBadge>i</InfoBadge>
            </ActionRow>
          </Actions>
          <CloseButton>×</CloseButton>
          <PopupTip />
        </Popup>
        <Chevrons width="74" height="62" viewBox="0 0 74 62" fill="none" stroke="#000" strokeOpacity=".86" strokeWidth="5">
          <path d="M3 4L37 39L71 4M3 24L37 59L71 24" />
        </Chevrons>
      </MapFrame>
    </Page>
  );
}
